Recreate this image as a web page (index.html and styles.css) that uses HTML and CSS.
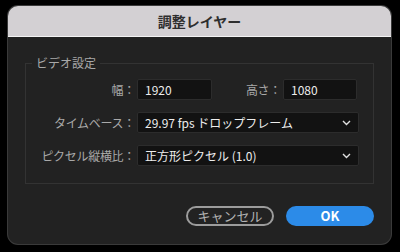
FILE: index.html
```html
<!DOCTYPE HTML>
<html>

<head>
    <meta charset="utf-8">
    <title>調整レイヤー</title>
    <link rel="stylesheet" href="styles.css">
</head>

<body>
    <div class="dialog">
        <div class="titlebar">調整レイヤー</div>
        <div class="content">
            <fieldset class="group">
                <legend>ビデオ設定</legend>
                <div class="grid">
                    <label class="lbl">幅：</label>
                    <div class="field">1920</div>
                    <label class="lbl">高さ：</label>
                    <div class="field short">1080</div>

                    <label class="lbl">タイムベース：</label>
                    <div class="field select">
                        <span>29.97 fps ドロップフレーム</span>
                        <svg class="chev" width="9" height="6" viewBox="0 0 9 6"><path d="M1 1 L4.5 4.5 L8 1" fill="none" stroke="#e0e0e0" stroke-width="1.4"/></svg>
                    </div>

                    <label class="lbl">ピクセル縦横比：</label>
                    <div class="field select">
                        <span>正方形ピクセル (1.0)</span>
                        <svg class="chev" width="9" height="6" viewBox="0 0 9 6"><path d="M1 1 L4.5 4.5 L8 1" fill="none" stroke="#e0e0e0" stroke-width="1.4"/></svg>
                    </div>
                </div>
            </fieldset>
            <div class="buttons">
                <button class="btn cancel">キャンセル</button>
                <button class="btn ok">OK</button>
            </div>
        </div>
    </div>
</body>

</html>
```

FILE: styles.css
```css
* {
    box-sizing: border-box;
}

body {
    margin: 0;
    background-color: #000;
    font-family: "Noto Sans CJK JP", "Noto Sans", sans-serif;
    width: 400px;
    height: 252px;
    padding-top: 6px;
    padding-left: 8px;
}

/* ダイアログ */
.dialog {
    width: 383px;
    height: 238px;
    border-radius: 10px;
    background-color: #222222;
    overflow: hidden;
    box-shadow: 0 0 0 1px #3a3a3a;
}

.titlebar {
    height: 31px;
    background-color: #d3d0d3;
    border-bottom: 1px solid #f4f4f4;
    display: flex;
    align-items: center;
    justify-content: center;
    font-size: 14px;
    font-weight: bold;
    color: #2e2e2e;
    padding-bottom: 1px;
}

.content {
    padding: 0 17px;
}

/* グループ */
.group {
    margin: 19px 0 0 0;
    padding: 9px 0 17px 0;
    border: 1px solid #333333;
    min-width: 0;
}

.group legend {
    margin-left: 6px;
    padding: 0 4px;
    font-size: 12px;
    line-height: 14px;
    color: #a8a8a8;
}

.grid {
    display: grid;
    grid-template-columns: 111px 75px 71px 76px;
    grid-auto-rows: 21px;
    row-gap: 12px;
}

.lbl {
    font-size: 12px;
    color: #a9a9a9;
    text-align: right;
    padding-right: 2px;
    line-height: 21px;
    letter-spacing: -0.3px;
}

.field {
    background-color: #121212;
    border: 1px solid #2c2c2c;
    border-radius: 2px;
    color: #ededed;
    font-size: 12px;
    line-height: 19px;
    padding-left: 7px;
}

.field.short {
    width: 74px;
}

.select {
    grid-column: 2 / 5;
    display: flex;
    align-items: center;
    justify-content: space-between;
    padding-right: 7px;
}

.chev {
    display: block;
}

/* ボタン */
.buttons {
    display: flex;
    justify-content: flex-end;
    gap: 12px;
    margin-top: 22px;
}

.btn {
    width: 88px;
    height: 20px;
    border-radius: 11px;
    font-family: "Noto Sans CJK JP", "Noto Sans", sans-serif;
    font-size: 13px;
    line-height: 16px;
    padding: 0;
}

.cancel {
    background-color: transparent;
    border: 2px solid #9c9c9c;
    color: #b3b3b3;
}

.ok {
    background-color: #2c8be8;
    border: none;
    color: #fff;
    font-weight: bold;
}
```
